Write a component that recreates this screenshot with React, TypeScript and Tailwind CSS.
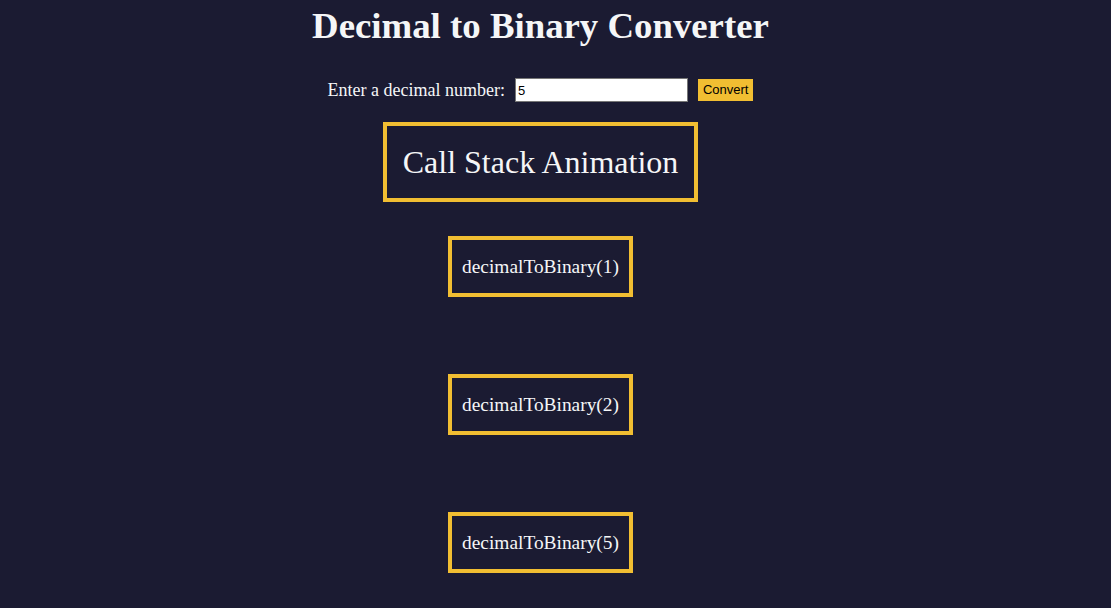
import React from "react";

export default function App() {
  const frames = [1, 2, 5];
  return (
    <div className="min-h-[608px] w-full bg-[#1b1b32] text-[#f5f6f7]" style={{ fontFamily: '"Liberation Serif", serif' }}>
      <div className="w-[1081px] flex flex-col items-center">
        <h1 className="mt-[2px] text-[36.8px] font-bold leading-[48px]">Decimal to Binary Converter</h1>
        <div className="mt-[28px] flex items-center h-[24px]">
          <label className="text-[18px]">Enter a decimal number:</label>
          <input
            defaultValue="5"
            className="ml-[10px] w-[173px] h-[24px] bg-white text-black text-[13px] px-[2px] border border-[#767676] outline-none"
            style={{ fontFamily: '"Liberation Sans", Arial, sans-serif' }}
          />
          <button
            className="ml-[10px] h-[22px] px-[5px] bg-[#f1be32] text-black text-[13px]"
            style={{ fontFamily: '"Liberation Sans", Arial, sans-serif' }}
          >
            Convert
          </button>
        </div>
        <div className="mt-[20px] border-4 border-[#f1be32] px-[16px] py-[18px] text-[32px] leading-[36px]">
          Call Stack Animation
        </div>
        <div className="mt-[34px] flex flex-col items-center gap-[77px]">
          {frames.map((n) => (
            <div key={n} className="border-4 border-[#f1be32] px-[10.5px] py-[16px] text-[19.4px] leading-[21px]">
              decimalToBinary({n})
            </div>
          ))}
        </div>
      </div>
    </div>
  );
}
